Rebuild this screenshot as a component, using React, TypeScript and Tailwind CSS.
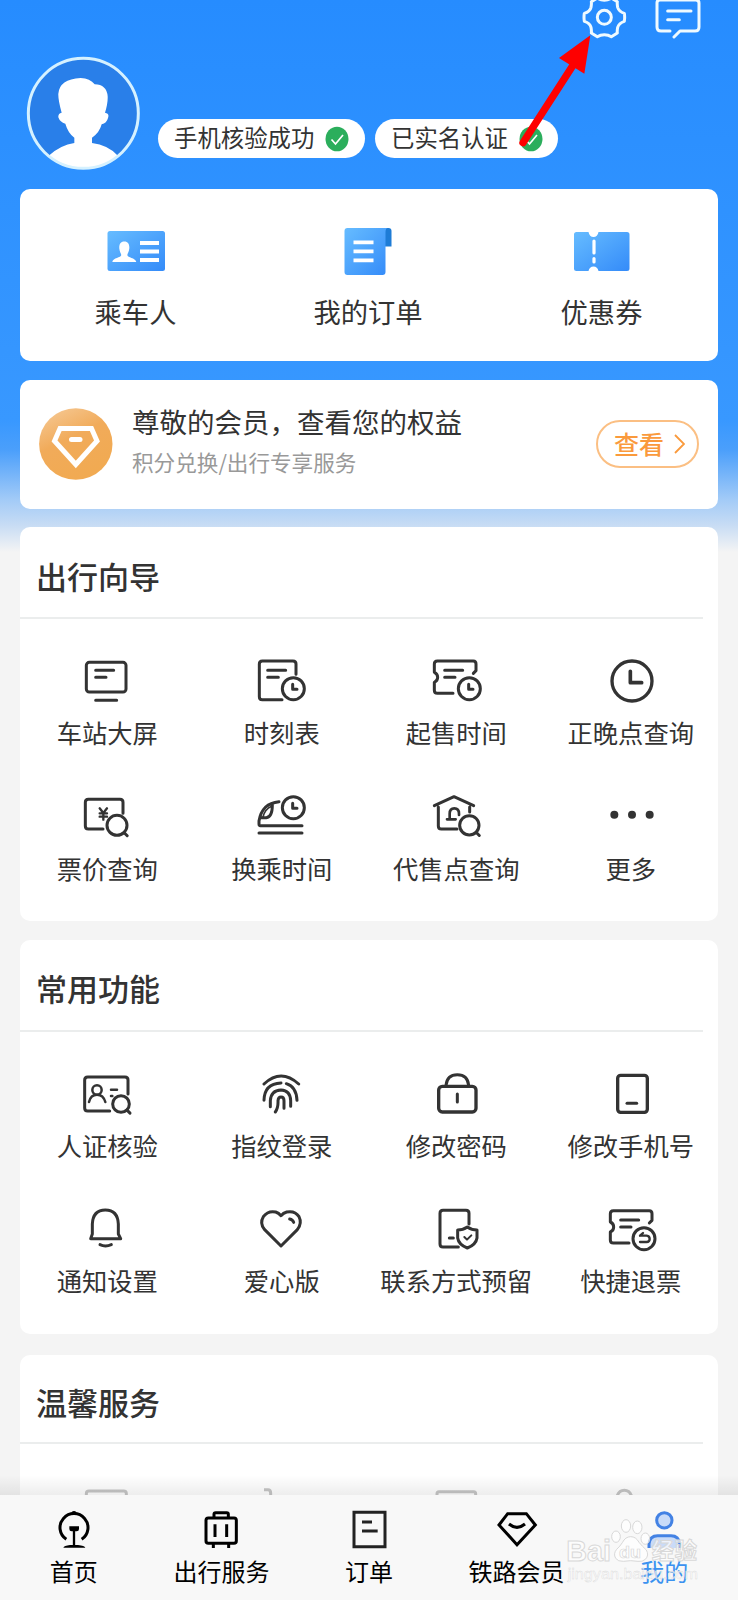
import type { ReactNode } from 'react';
import clsx from 'clsx';

type Item = { label: string; view: string; icon: ReactNode };

function ClockBadge({ x, y }: { x: number; y: number }) {
  return (
    <>
      <circle cx={x} cy={y} r="33" />
      <path d={`M${x - 2} ${y - 13}v15h13`} />
    </>
  );
}

function Magnifier({ x, y, r }: { x: number; y: number; r: number }) {
  return (
    <>
      <circle cx={x} cy={y} r={r} />
      <path d={`M${x + r * 0.72} ${y + r * 0.74}l9 9`} />
    </>
  );
}

const guideItems: Item[] = [
  {
    label: '车站大屏',
    view: '232 45 180 156',
    icon: (
      <>
        <rect x="260" y="67" width="119" height="89" rx="9" />
        <path d="M288 91h54M288 112h31M288 181h63" />
      </>
    ),
  },
  {
    label: '时刻表',
    view: '755 45 180 156',
    icon: (
      <>
        <path d="M845 179H786q-9 0-9-9V72q0-9 9-9h92q9 0 9 9v31M802 91h54M802 112h32" />
        <ClockBadge x={879} y={146} />
      </>
    ),
  },
  {
    label: '起售时间',
    view: '175 45 180 156',
    icon: (
      <>
        <path d="M256 160h-47q-9 0-9-9v-24q10-4 10-15t-10-15V72q0-9 9-9h108q8 0 8 9v20l-8 8M231 91h54M231 112h31" />
        <ClockBadge x={305} y={146} />
      </>
    ),
  },
  {
    label: '正晚点查询',
    view: '698 45 180 156',
    icon: (
      <>
        <circle cx="791" cy="123" r="60" strokeWidth="10" />
        <path d="M786 94v34h34" strokeWidth="11" />
      </>
    ),
  },
  {
    label: '票价查询',
    view: '232 452 180 156',
    icon: (
      <>
        <path d="M310 566h-44q-9 0-9-9v-71q0-9 9-9h95q9 0 9 9v33" />
        <path d="M300 504l11 14l11-14M311 518v20M300 519h22M300 529h22" strokeWidth="7" />
        <Magnifier x={352} y={555} r={30} />
      </>
    ),
  },
  {
    label: '换乘时间',
    view: '755 452 180 156',
    icon: (
      <>
        <path d="M905 556H780q-4 0-4-5v-9q4-26 20-42q14-13 40-16M784 532h14q18-2 18-38M776 578h129" />
        <path d="M788 530q6-24 26-32" strokeWidth="5" />
        <ClockBadge x={879} y={502} />
      </>
    ),
  },
  {
    label: '代售点查询',
    view: '175 452 180 156',
    icon: (
      <>
        <path d="M200 496l59-27l59 27M212 500v57q0 9 9 9h47M306 500v15" />
        <path d="M238 537h26M246 536v-16q0-16 14-16t14 16v4" strokeWidth="8" />
        <Magnifier x={305} y={555} r={29} />
      </>
    ),
  },
  {
    label: '更多',
    view: '698 452 180 156',
    icon: (
      <g fill="currentColor" stroke="none">
        <circle cx="738" cy="523" r="12" />
        <circle cx="791" cy="523" r="12" />
        <circle cx="844" cy="523" r="12" />
      </g>
    ),
  },
];

const commonItems: Item[] = [
  {
    label: '人证核验',
    view: '232 52 180 156',
    icon: (
      <>
        <path d="M330 181h-66q-9 0-9-9V88q0-9 9-9h112q9 0 9 9v42" />
        <path d="M268 154q5-22 24-22t25 22M334 117h18M334 136h4" strokeWidth="7.5" />
        <circle cx="292" cy="118" r="14" strokeWidth="7.5" />
        <Magnifier x={364} y={160} r={25} />
      </>
    ),
  },
  {
    label: '指纹登录',
    view: '755 52 180 156',
    icon: (
      <path d="M791 100q51-48 104 0M791 149q1-50 51-52M858 99q30 9 32 50M810 168v-18q2-31 32-32q28 1 29 32v17M825 184q9-12 8-34q1-11 9-11q9 0 9 11v23" />
    ),
  },
  {
    label: '修改密码',
    view: '175 52 180 156',
    icon: (
      <>
        <rect x="213" y="107" width="112" height="77" rx="11" strokeWidth="10" />
        <path d="M235 104q3-32 34-32t34 32M269 130v24" />
      </>
    ),
  },
  {
    label: '修改手机号',
    view: '698 52 180 156',
    icon: (
      <>
        <rect x="748" y="74" width="89" height="111" rx="9" strokeWidth="10" />
        <path d="M776 158h29" />
      </>
    ),
  },
  {
    label: '通知设置',
    view: '232 459 180 156',
    icon: <path d="M273 566h90l-7-14v-30q-2-42-39-42t-39 42v30zM301 584q16 8 34 0" />,
  },
  {
    label: '爱心版',
    view: '755 459 180 156',
    icon: (
      <path d="M842 588l-49-49q-16-19-4-39q14-19 37-14q9 3 16 11q7-8 17-11q25-5 37 14q10 20-5 39zM868 507q9 2 12 10" />
    ),
  },
  {
    label: '联系方式预留',
    view: '175 459 180 156',
    icon: (
      <>
        <path d="M272 591h-46q-9 0-9-9v-92q0-9 9-9h69q9 0 9 9v32M245 564h12" />
        <path d="M299 531q13 9 29 9v24q-3 20-29 30q-26-10-29-30v-24q16 0 29-9z" />
        <path d="M290 561l8 8l13-13" strokeWidth="6" />
      </>
    ),
  },
  {
    label: '快捷退票',
    view: '698 459 180 156',
    icon: (
      <>
        <path d="M782 579h-47q-9 0-9-9v-24q10-4 10-15t-10-15v-25q0-9 9-9h108q8 0 8 9v20l-8 8M757 510h54M757 531h31" />
        <circle cx="827" cy="566" r="33" />
        <path d="M815 557h20q9 1 9 10t-9 9h-20M824 549l-9 8" strokeWidth="7" />
      </>
    ),
  },
];

function SectionHeader({ title, className }: { title: string; className: string }) {
  return (
    <>
      <h2 className={clsx('flex items-center pt-2 pl-4 text-[31px] font-medium text-[#333]', className)}>
        {title}
      </h2>
      <div className="mr-[15px] h-0.5 bg-[#ebeded]" />
    </>
  );
}

function Section({ title, items, className }: { title: string; items: Item[]; className: string }) {
  return (
    <section className={clsx('rounded-[10px] bg-white', className)}>
      <SectionHeader title={title} className="h-[90px]" />
      <div className="grid grid-cols-4 gap-y-[42.5px] pt-9">
        {items.map((item) => (
          <div key={item.label} className="flex flex-col items-center">
            <svg
              viewBox={item.view}
              className="h-[52px] w-[60px]"
              fill="none"
              stroke="currentColor"
              strokeWidth="9"
              strokeLinecap="round"
              strokeLinejoin="round"
            >
              {item.icon}
            </svg>
            <span className="mt-[9px] text-[25.3px] leading-8 whitespace-nowrap">{item.label}</span>
          </div>
        ))}
      </div>
    </section>
  );
}

function CheckMark() {
  return (
    <svg viewBox="0 0 24 26" className="h-[26px] w-6 shrink-0" fill="none">
      <ellipse cx="12" cy="13" rx="11.5" ry="12.3" fill="#2bae5c" />
      <path d="M6.5 13.5l4 4.5l7.5-9" stroke="#fff" strokeWidth="1.7" />
    </svg>
  );
}

function Header() {
  return (
    <header className="h-[189px]">
      <div className="flex h-10 justify-end gap-[26px] pr-9 text-[#effaff]">
        <svg viewBox="637 0 141 120" className="h-10 w-[47px]" fill="none" stroke="currentColor" strokeWidth="9">
          <path
            strokeLinejoin="round"
            d="M647 40Q645 52 647 64Q664 69 667 82Q669 92 668 99L686 110Q695 104 707 104Q719 104 728 110L746 99Q745 92 747 82Q751 69 767 64Q769 52 767 40Q751 35 747 22Q745 12 746 5L728-6Q719 1 707 1Q695 1 686-6L668 5Q669 12 667 22Q664 35 647 40Z"
          />
          <circle cx="707" cy="52" r="21" />
        </svg>
        <svg
          viewBox="857 0 144 120"
          className="h-10 w-12"
          fill="none"
          stroke="currentColor"
          strokeWidth="9"
          strokeLinecap="round"
          strokeLinejoin="round"
        >
          <path d="M905 93h-27q-12 0-12-12V8q0-8 10-8h106q10 0 10 9v72q0 12-12 12h-45l-18 18M898 33h70M898 59h35" />
        </svg>
      </div>
      <div className="flex items-start pt-[15px] pl-[25px]">
        <svg viewBox="73 166 351 351" className="h-[117px] w-[117px]">
          <defs>
            <clipPath id="avatar">
              <circle cx="248" cy="341" r="166" />
            </clipPath>
          </defs>
          <circle cx="248" cy="341" r="166" fill="#297fe9" />
          <g fill="#fff" clipPath="url(#avatar)">
            <path d="M183 339Q172 300 173 282Q176 239 240 235Q268 236 282 254Q318 255 321 290Q322 310 313 339Q327 341 322 355Q318 371 303 374Q296 400 274 414V430Q322 436 350 467V520H146V467Q180 436 221 430V414Q202 400 194 372Q178 368 173 353Q172 341 183 339Z" />
          </g>
          <circle cx="248" cy="341" r="165" fill="none" stroke="#d5f1ff" strokeWidth="9" />
        </svg>
        <div className="mt-16 ml-4 flex gap-2.5 text-[23.4px] text-[#333]">
          <div className="flex h-[39px] w-[207px] items-center rounded-full bg-white pl-4">
            <span className="-mt-0.5 w-[151px] leading-none">手机核验成功</span>
            <CheckMark />
          </div>
          <div className="flex h-[39px] w-[183px] items-center rounded-full bg-white pl-4">
            <span className="-mt-0.5 w-32 leading-none">已实名认证</span>
            <CheckMark />
          </div>
        </div>
      </div>
    </header>
  );
}

function QuickLinks() {
  return (
    <section className="grid h-[172px] grid-cols-[231px_234px_233px] rounded-[10px] bg-white pt-[33px] text-[27.3px]">
      <svg className="absolute h-0 w-0">
        <defs>
          <linearGradient id="sky" x1="0" y1="0" x2="1" y2="1">
            <stop offset="0" stopColor="#66bcff" />
            <stop offset="1" stopColor="#348bf9" />
          </linearGradient>
        </defs>
      </svg>
      <div className="flex flex-col items-center">
        <svg viewBox="105 222 60 60" className="h-15 w-15">
          <rect x="106.5" y="231" width="57.5" height="40" rx="2.5" fill="url(#sky)" />
          <path
            d="M123.3 241.5c4 0 5.3 3.2 5 7c-.3 3-1.5 4.5-2 6.5c.3 3 8 2.5 9 7h-24c.7-4.5 8.7-4 9-7c-.5-2-1.7-3.5-2-6.5c-.3-3.8 1-7 5-7z"
            fill="#fff"
          />
          <path d="M139 243h19M139 251.5h19M139 260h19" stroke="#fff" strokeWidth="3.8" />
        </svg>
        <span className="mt-[9px] leading-10">乘车人</span>
      </div>
      <div className="flex flex-col items-center">
        <svg viewBox="339 222 60 60" className="h-15 w-15">
          <path d="M384 228h5.5q3 0 3 3v15.500h-8.500z" fill="#1e7cd6" />
          <path d="M348.500 228H389q-2.500 0-2.500 4v40q0 3-3 3h-35q-3 0-3-3v-41q0-3 3-3z" fill="url(#sky)" />
          <path d="M354.500 242.300h20M354.500 251.300h20M354.500 260.300h20" stroke="#fff" strokeWidth="3.8" />
        </svg>
        <span className="mt-[9px] leading-10">我的订单</span>
      </div>
      <div className="flex flex-col items-center">
        <svg viewBox="573 222 60 60" className="h-15 w-15">
          <path
            d="M577.500 232H589.500q1 5 5 5t5-5H628q2.500 0 2.500 2.500v34q0 2.500-2.500 2.500H599.500q-1-4.500-5-4.500t-5 4.500H577.500q-2.500 0-2.500-2.500v-34q0-2.500 2.500-2.500z"
            fill="url(#sky)"
          />
          <path d="M595 241v12M595 258.500v3.500" stroke="#fff" strokeWidth="3.2" strokeLinecap="round" />
        </svg>
        <span className="mt-[9px] leading-10">优惠券</span>
      </div>
    </section>
  );
}

function MemberCard() {
  return (
    <section className="mt-[19px] flex h-[129px] items-center rounded-[10px] bg-white px-[19px] pb-0.5">
      <svg viewBox="39 408 74 72" className="h-[72px] w-[74px]">
        <defs>
          <linearGradient id="gold" x1="0" y1="0" x2="0.5" y2="1">
            <stop offset="0" stopColor="#f6cc9b" />
            <stop offset="0.5" stopColor="#f1ab5a" />
            <stop offset="1" stopColor="#f1aa52" />
          </linearGradient>
        </defs>
        <ellipse cx="75.8" cy="444" rx="36.7" ry="35.8" fill="url(#gold)" />
        <path d="M60 428.500H91.500L97 441L75.800 464.500L54.500 441Z" fill="none" stroke="#fff" strokeWidth="5" />
        <path d="M71.500 439.500h8.500" stroke="#fff" strokeWidth="5" strokeLinecap="round" />
      </svg>
      <div className="-mt-2 ml-[19px] flex-1">
        <p className="text-[27.5px] leading-10 text-[#333]">尊敬的会员，查看您的权益</p>
        <p className="mt-[5px] text-[21.6px] leading-8 text-[#999]">积分兑换/出行专享服务</p>
      </div>
      <button className="flex h-12 w-[103px] items-center justify-center gap-2.5 rounded-full border-2 border-[#fbbf83] pl-1 text-[25px] font-medium text-[#fa9a3c]">
        查看
        <svg viewBox="0 0 11 20" className="h-5 w-[11px]" fill="none" stroke="currentColor" strokeWidth="1.8">
          <path d="M1 1l9 9l-9 9" />
        </svg>
      </button>
    </section>
  );
}

// Row that is scrolled mostly behind the tab bar
function WarmService() {
  return (
    <section className="mt-[21px] h-[200px] rounded-t-[10px] bg-white">
      <SectionHeader title="温馨服务" className="h-[87px]" />
      <div className="grid grid-cols-4 justify-items-center pt-[39px] text-[#c6c6c6]">
        {[
          'M28 60V32q0-8 8-8h104q8 0 8 8v28',
          'M36 20h12q8 0 8 10v30',
          'M33 60V32q0-6 6-6h104q6 0 6 6v28',
          'M48 40q6-18 22-18t22 18',
        ].map((d) => (
          <svg key={d} viewBox="0 0 180 156" className="h-[52px] w-[60px]" fill="none" stroke="currentColor" strokeWidth="9">
            <path d={d} />
          </svg>
        ))}
      </div>
    </section>
  );
}

const tabs: Item[] = [
  {
    label: '首页',
    view: '149 114 144 132',
    icon: (
      <>
        <path d="M198 208a42 42 0 1 1 46 0" strokeWidth="9" />
        <path d="M221 183v44" strokeWidth="7" />
        <path
          d="M213 131q0-8 8-8t8 8zM207 169h29v8q0 7-7 7h-15q-7 0-7-7zM189 233q2-6 20-8h24q20 2 22 8z"
          fill="currentColor"
          stroke="none"
        />
      </>
    ),
  },
  {
    label: '出行服务',
    view: '592 114 144 132',
    icon: (
      <>
        <rect x="619" y="144" width="91" height="76" rx="7" />
        <path d="M643 142v-9q0-5 5-5h33q5 0 5 5v9M646 163v38M681 163v38M641 222v12M687 222v12" />
      </>
    ),
  },
  {
    label: '订单',
    view: '1035 114 144 132',
    icon: <path d="M1062 127h93v103h-93zM1086 156h30M1086 183h47" stroke="#222" />,
  },
  {
    label: '铁路会员',
    view: '374 114 144 132',
    icon: <path d="M418 131h56l27 34l-55 59l-54-59zM422 162q24 20 48 0" />,
  },
  {
    label: '我的',
    view: '816 114 144 132',
    icon: (
      <g stroke="#4382e4" fill="#c9dbf8">
        <circle cx="889" cy="151" r="23" />
        <path d="M843 234v-12q2-25 26-25h40q24 0 26 25v12" />
      </g>
    ),
  },
];

function TabBar() {
  return (
    <nav className="relative grid h-[105px] shrink-0 grid-cols-5 bg-[#f8f8f8] pt-[13px] text-black">
      <div className="pointer-events-none absolute inset-x-0 bottom-full h-5 bg-linear-to-b from-black/0 to-black/7" />
      {tabs.map((tab) => (
        <div key={tab.label} className="flex flex-col items-center">
          <svg viewBox={tab.view} className="h-11 w-12" fill="none" stroke="currentColor" strokeWidth="9">
            {tab.icon}
          </svg>
          <span className={clsx('mt-[5px] text-2xl leading-7', tab.label === '我的' && 'text-[#3b92f0]')}>
            {tab.label}
          </span>
        </div>
      ))}
    </nav>
  );
}

function Watermark() {
  return (
    <svg
      viewBox="590 140 405 210"
      className="pointer-events-none absolute right-[38px] bottom-[14px] h-[70px] w-[135px]"
      fill="#ffffffb0"
      stroke="#d8d8d8"
      strokeWidth="3"
      fontFamily="'Liberation Sans', 'Noto Sans CJK SC', sans-serif"
      fontWeight="bold"
    >
      <text x="594" y="275" fontSize="86" textLength="134" lengthAdjust="spacingAndGlyphs">
        Bai
      </text>
      <ellipse cx="743" cy="202" rx="13" ry="17" />
      <ellipse cx="773" cy="170" rx="14" ry="19" />
      <ellipse cx="807" cy="174" rx="14" ry="19" />
      <ellipse cx="831" cy="208" rx="13" ry="17" />
      <path d="M787 202q16 0 25 17q10 12 22 23q9 16-3 28q-8 8-22 6q-22-4-44 0q-16 1-23-9q-8-14 3-27q10-9 17-20q9-18 25-18z" />
      <text x="752" y="266" fontSize="50" strokeWidth="2" textLength="66" lengthAdjust="spacingAndGlyphs">
        du
      </text>
      <text x="850" y="268" fontSize="67" textLength="136">
        经验
      </text>
      <text
        x="598"
        y="328"
        fontSize="42"
        strokeWidth="1"
        fontWeight="normal"
        textLength="391"
        lengthAdjust="spacingAndGlyphs"
      >
        jingyan.baidu.com
      </text>
    </svg>
  );
}

export default function App() {
  return (
    <div
      lang="zh-CN"
      className="relative flex h-[1600px] w-[738px] flex-col overflow-hidden bg-[#f4f4f4] font-['Noto_Sans_CJK_SC',sans-serif] text-[#333]"
    >
      <main className="min-h-0 flex-1 overflow-hidden bg-[linear-gradient(to_bottom,#268cff_0,#3898ff_420px,#4b9ffb_450px,#a3cbf7_500px,#c7dcf4_525px,#f4f4f4_552px)]">
        <Header />
        <div className="px-5">
          <QuickLinks />
          <MemberCard />
          <Section title="出行向导" items={guideItems} className="mt-[18px] h-[394px]" />
          <Section title="常用功能" items={commonItems} className="mt-[18.5px] h-[394px]" />
          <WarmService />
        </div>
      </main>
      <TabBar />
      <svg viewBox="440 90 240 360" className="pointer-events-none absolute top-[30px] left-[514.7px] h-[120px] w-20">
        <path d="M464 428L615 194" stroke="#fe0000" strokeWidth="22" strokeLinecap="round" />
        <path d="M666 106L572 174L648 221Z" fill="#fe0000" />
      </svg>
      <Watermark />
    </div>
  );
}
